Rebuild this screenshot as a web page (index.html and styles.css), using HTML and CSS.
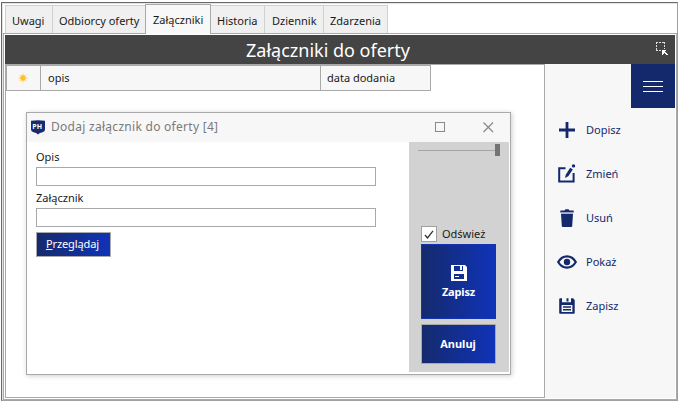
FILE: index.html
```
<!DOCTYPE html>
<html lang="pl">
<head>
<meta charset="utf-8">
<title>Załączniki do oferty</title>
<link rel="stylesheet" href="styles.css">
</head>
<body>
<div class="frame">
  <nav class="tabs">
    <div class="tab t1"><span>Uwagi</span></div>
    <div class="tab t2"><span>Odbiorcy oferty</span></div>
    <div class="tab t3 active"><span>Załączniki</span></div>
    <div class="tab t4"><span>Historia</span></div>
    <div class="tab t5"><span>Dziennik</span></div>
    <div class="tab t6"><span>Zdarzenia</span></div>
  </nav>
  <div class="page">
    <header class="titlebar">
      <h1>Załączniki do oferty</h1>
      <svg class="picker" width="12" height="14" viewBox="0 0 12 14" shape-rendering="crispEdges"><path d="M.5 0v9M0 .5h9M8.500 0v7M0 8.500h5" fill="none" stroke="#ddd" stroke-dasharray="2 1"/><path d="M6 8h4v1h-1v1h1v1h1v1h1v1h-2v-1H9v-1H8v1H7v1H6z" fill="#fff"/></svg>
    </header>
    <div class="content">
      <main class="list">
        <div class="columns">
          <div class="col c1"><svg width="10" height="10" viewBox="0 0 10 10"><path d="M5 .5v9M.5 5h9M1.800 1.800l6.400 6.400M8.200 1.800L1.800 8.200" stroke="#ffd060"/><circle cx="5" cy="5" r="2.700" fill="#ffc126"/></svg></div>
          <div class="col c2">opis</div>
          <div class="col c3">data dodania</div>
        </div>
        <section class="dialog">
          <div class="caption">
            <svg class="badge" width="14" height="15" viewBox="0 0 14 15"><path d="M0 .8Q7-.4 14 .8V9.500q0 2-2.500 2.800Q8.500 12.700 7 14.500 5.500 12.700 2.500 12.300 0 11.500 0 9.500z" fill="#172b6d"/><text x="1.300" y="9" class="logo">PH</text></svg>
            <span class="name">Dodaj załącznik do oferty [4]</span>
            <svg class="max" width="11" height="11"><rect x=".5" y=".5" width="9" height="9" fill="none" stroke="#8a8a8a"/></svg>
            <svg class="close" width="11" height="11"><path d="M.5.5l9.500 9.500M10 .5L.5 10" stroke="#888" stroke-width="1.200"/></svg>
          </div>
          <div class="dialog-body">
            <form class="form">
              <label for="opis">Opis</label>
              <input id="opis" type="text">
              <label for="plik">Załącznik</label>
              <input id="plik" type="text">
              <button type="button" class="browse"><span><u>P</u>rzeglądaj</span></button>
            </form>
            <aside class="actions">
              <div class="slider"><i class="track"></i><i class="thumb"></i></div>
              <div class="refresh"><span class="box"><svg width="10" height="9" viewBox="0 0 10 9"><path d="M1 5l2.500 3L9 .8" fill="none" stroke="#333" stroke-width="1.300"/></svg></span><span class="rlabel">Odśwież</span></div>
              <button type="button" class="save">
                <svg width="16" height="16" viewBox="0 0 16 16"><path fill="#fff" fill-rule="evenodd" d="M0 0h14l2 2v14H0zM3 1v5h9V1zM3 9v5h10V9z"/><path d="M9 1h2v4H9zM4 11h4v1H4z" fill="#fff"/></svg>
                <span>Zapisz</span>
              </button>
              <button type="button" class="cancel"><span>Anuluj</span></button>
            </aside>
          </div>
        </section>
      </main>
      <aside class="side">
        <div class="burger"><i></i><i></i><i></i></div>
        <ul class="menu">
          <li><svg viewBox="0 0 20 20"><path d="M10 2v16M2 10h16" stroke="#14296c" stroke-width="2.800"/></svg><span>Dopisz</span></li>
          <li><svg viewBox="0 0 20 20"><path d="M8.500 4.200H2.200v13.200h14.400V9" fill="none" stroke="#14296c" stroke-width="2"/><path d="M8 14l.9-3.600L13.200 3.800l2.600 1.700-4.500 6.700z" fill="#14296c"/><circle cx="16.500" cy="1.900" r="1.700" fill="#14296c"/></svg><span>Zmień</span></li>
          <li><svg viewBox="0 0 20 20"><path d="M3.300 2.600h4.200l1-1.300h3l1 1.300h4.200v1.900H3.300z" fill="#14296c"/><path d="M4 4.500h12v1.600H4z" fill="#aab3cd"/><path d="M4 6.100h12l-.8 12q0 .9-1 .9H5.800q-1 0-1-.9z" fill="#14296c"/></svg><span>Usuń</span></li>
          <li><svg viewBox="0 0 20 20"><path d="M1.200 10q3.300-5.700 8.800-5.700T18.800 10q-3.300 5.700-8.800 5.700T1.200 10z" fill="none" stroke="#14296c" stroke-width="2.200"/><circle cx="10" cy="10" r="3.200" fill="#14296c"/></svg><span>Pokaż</span></li>
          <li><svg viewBox="0 0 20 20"><path fill="#14296c" fill-rule="evenodd" d="M2.200 3.200q0-1 1-1H5v4h9v-4h2L17.700 4v13q0 .8-.8.8H3q-.8 0-.8-.8zM4.600 9v7h10.800V9z"/><path d="M9.500 2.200h2V5.500h-2zM6 10.200h8v1.500H6zM6 13.100h8v1.500H6z" fill="#14296c"/></svg><span>Zapisz</span></li>
        </ul>
      </aside>
    </div>
  </div>
</div>
</body>
</html>
```
FILE: styles.css
```
* { box-sizing: border-box; }
body {
  margin: 0;
  width: 678px;
  height: 402px;
  overflow: hidden;
  background: #fff;
  font: 11px/16px "Noto Sans", "Open Sans", sans-serif;
  color: #1a1a1a;
}
.frame {
  margin: 2px 0 0 1px;
  width: 677px;
  height: 399px;
  border-top: 1px solid #696969;
  border-left: 1px solid #696969;
  border-right: 1px solid #a0a0a0;
  border-bottom: 1px solid #a0a0a0;
  box-shadow: inset 1px 1px #e3e3e3;
  padding: 1px 0 0 1px;
}
.tabs { display: flex; height: 29px; padding: 1px 0 0 2px; }
.tab {
  height: 28px;
  border: 1px solid #d0d0d0;
  border-right: 0;
  border-bottom: 0;
  background: #f0f0f0;
  display: flex;
  padding: 7px 0 0 6px;
  white-space: nowrap;
}
.t1 { width: 47px; }
.t2 { width: 93px; }
.t3 { width: 66px; }
.t4 { width: 53px; border-left: 0; }
.t5 { width: 59px; padding-left: 7px; }
.t6 { width: 65px; border-right: 1px solid #d0d0d0; }
.tab.active {
  margin-top: -1px;
  height: 30px;
  padding-left: 7px;
  background: #f8f8f8;
  border: 1px solid #a9a9a9;
  border-bottom: 0;
  position: relative;
}
.page {
  height: 367px;
  border: 1px solid #a9a9a9;
  padding: 1px 1px 0 1px;
  background: #fff;
}
.titlebar {
  height: 29px;
  background: #444;
  color: #fff;
  display: flex;
  align-items: center;
  padding-right: 7px;
}
h1 {
  flex: 1;
  margin: 0;
  padding: 1px 17px 0 0;
  font: 400 18px/29px "Noto Sans", sans-serif;
  text-align: center;
}
.picker { margin: -1px 0 0 -12px; }
.content { display: flex; height: 334px; }
.list {
  width: 540px;
  border: 1px solid #a9a9a9;
}
.columns {
  display: flex;
  width: 425px;
  height: 26px;
  border: 1px solid #a9a9a9;
  background: #f7f7f7;
}
.col { padding: 4px 0 0 7px; border-right: 1px solid #a9a9a9; }
.c1 { width: 34px; padding: 7px 0 0 11px; line-height: 0; }
.c2 { width: 280px; }
.c3 { width: 109px; padding-left: 6px; border: 0; }
.dialog {
  width: 485px;
  height: 263px;
  margin: 21px 0 0 20px;
  border: 1px solid #a9a9a9;
  background: #fff;
  box-shadow: 1px 1px 5px rgba(0, 0, 0, .2);
}
.caption {
  height: 29px;
  background: #f7f7f7;
  display: flex;
  align-items: center;
  padding-left: 4px;
  color: #7a7a7a;
}
.badge { margin-top: -1px; }
.logo { font: 700 7px "Open Sans", sans-serif; fill: #fff; }
.name { width: 384px; margin: -1px 0 0 6px; font-size: 12px; letter-spacing: .28px; white-space: nowrap; }
.close { margin-left: 37px; }
.dialog-body { display: flex; height: 230px; }
.form { width: 382px; padding: 7px 0 0 9px; }
label { display: block; height: 18px; }
input {
  display: block;
  width: 340px;
  height: 19px;
  margin-bottom: 4px;
  border: 1px solid #a9a9a9;
  background: #fff;
}
button {
  display: block;
  padding: 0;
  border: 1px solid #a9a9a9;
  border-radius: 0;
  background: linear-gradient(90deg, #152a6d, #1033b8);
  color: #fff;
  font: 11px/16px "Noto Sans", sans-serif;
}
.browse { width: 75px; height: 25px; margin-top: 5px; padding: 0 2px 1px 0; letter-spacing: -.1px; }
.actions { width: 100px; background: #d2d2d2; padding: 2px 0 0 9px; }
.slider { display: flex; align-items: center; height: 12px; }
.track { width: 77px; height: 1px; background: #a5a5a5; }
.thumb { width: 5px; height: 12px; background: #747474; }
.refresh { display: flex; align-items: center; height: 16px; margin: 70px 0 2px 3px; }
.box {
  width: 16px;
  height: 16px;
  border: 1px solid #a0a0a0;
  background: #fff;
  display: flex;
  align-items: center;
  justify-content: center;
}
.rlabel { margin-left: 5px; }
.save, .cancel { width: 75px; margin-left: 3px; font-weight: 700; }
.save {
  display: flex;
  flex-direction: column;
  align-items: center;
  gap: 3px;
  height: 75px;
  padding: 20px 0 0 0;
  border-color: #1434b4;
}
.save span { letter-spacing: -.15px; }
.cancel { height: 40px; margin-top: 5px; padding-right: 1px; }
.side { width: 130px; background: #f7f7f7; }
.burger {
  width: 44px;
  height: 44px;
  margin-left: 86px;
  background: #14296c;
  display: flex;
  flex-direction: column;
  align-items: center;
  justify-content: center;
  gap: 4px;
}
.burger i { width: 20px; height: 1px; background: #fff; }
.menu { list-style: none; margin: 0; padding: 0 0 0 12px; color: #14296c; }
.menu li { display: flex; align-items: center; height: 44px; gap: 9px; }
.menu svg { width: 20px; height: 20px; overflow: visible; }
```
